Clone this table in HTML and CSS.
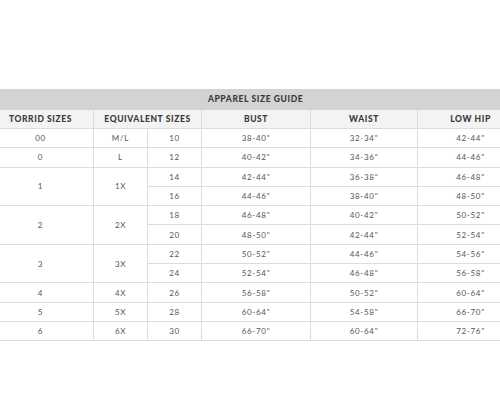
FILE: index.html
```html
<!DOCTYPE html>
<html>
<head>
<meta charset="utf-8">
<link rel="stylesheet" href="styles.css">
</head>
<body>
<div class="page">
<table class="size-table">
  <colgroup>
    <col class="c-torrid"><col class="c-eq1"><col class="c-eq2"><col class="c-bust"><col class="c-waist"><col class="c-hip">
  </colgroup>
  <thead>
    <tr class="title-row"><th colspan="6">APPAREL SIZE GUIDE</th></tr>
    <tr class="head-row">
      <th>TORRID SIZES</th>
      <th colspan="2">EQUIVALENT SIZES</th>
      <th>BUST</th>
      <th>WAIST</th>
      <th>LOW HIP</th>
    </tr>
  </thead>
  <tbody>
    <tr><td>00</td><td>M/L</td><td>10</td><td>38-40"</td><td>32-34"</td><td>42-44"</td></tr>
    <tr><td>0</td><td>L</td><td>12</td><td>40-42"</td><td>34-36"</td><td>44-46"</td></tr>
    <tr><td rowspan="2">1</td><td rowspan="2">1X</td><td>14</td><td>42-44"</td><td>36-38"</td><td>46-48"</td></tr>
    <tr><td>16</td><td>44-46"</td><td>38-40"</td><td>48-50"</td></tr>
    <tr><td rowspan="2">2</td><td rowspan="2">2X</td><td>18</td><td>46-48"</td><td>40-42"</td><td>50-52"</td></tr>
    <tr><td>20</td><td>48-50"</td><td>42-44"</td><td>52-54"</td></tr>
    <tr><td rowspan="2">3</td><td rowspan="2">3X</td><td>22</td><td>50-52"</td><td>44-46"</td><td>54-56"</td></tr>
    <tr><td>24</td><td>52-54"</td><td>46-48"</td><td>56-58"</td></tr>
    <tr><td>4</td><td>4X</td><td>26</td><td>56-58"</td><td>50-52"</td><td>60-64"</td></tr>
    <tr><td>5</td><td>5X</td><td>28</td><td>60-64"</td><td>54-58"</td><td>66-70"</td></tr>
    <tr><td>6</td><td>6X</td><td>30</td><td>66-70"</td><td>60-64"</td><td>72-76"</td></tr>
  </tbody>
</table>
</div>
</body>
</html>
```
FILE: styles.css
```css
html, body {
  margin: 0;
  padding: 0;
  background: #ffffff;
  overflow: hidden;
}
.page {
  width: 500px;
  height: 419px;
  overflow: hidden;
  padding-top: 89px;
  box-sizing: border-box;
}
.size-table {
  margin-left: -13px;
  width: 536px;
  border-collapse: collapse;
  table-layout: fixed;
  font-family: "Lato", "Open Sans", sans-serif;
  color: #555555;
  text-align: center;
}
.c-torrid { width: 106px; }
.c-eq1 { width: 54px; }
.c-eq2 { width: 54px; }
.c-bust { width: 109px; }
.c-waist { width: 107px; }
.c-hip { width: 106px; }
.title-row th {
  background: #d3d3d3;
  height: 20px;
  padding: 0;
  font-size: 8.5px;
  font-weight: 900;
  letter-spacing: 0.6px;
  color: #3a3a3a;
  border-bottom: 1px solid #d3d3d3;
}
.head-row th {
  background: #f3f3f3;
  height: 18px;
  padding: 0;
  font-size: 8.5px;
  font-weight: 900;
  letter-spacing: 0.6px;
  color: #3a3a3a;
  border: 1px solid #dddddd;
  border-top: none;
}
.size-table td {
  height: 18.3px;
  padding: 0;
  font-size: 8px;
  letter-spacing: 0.7px;
  border: 1px solid #dddddd;
}
```
